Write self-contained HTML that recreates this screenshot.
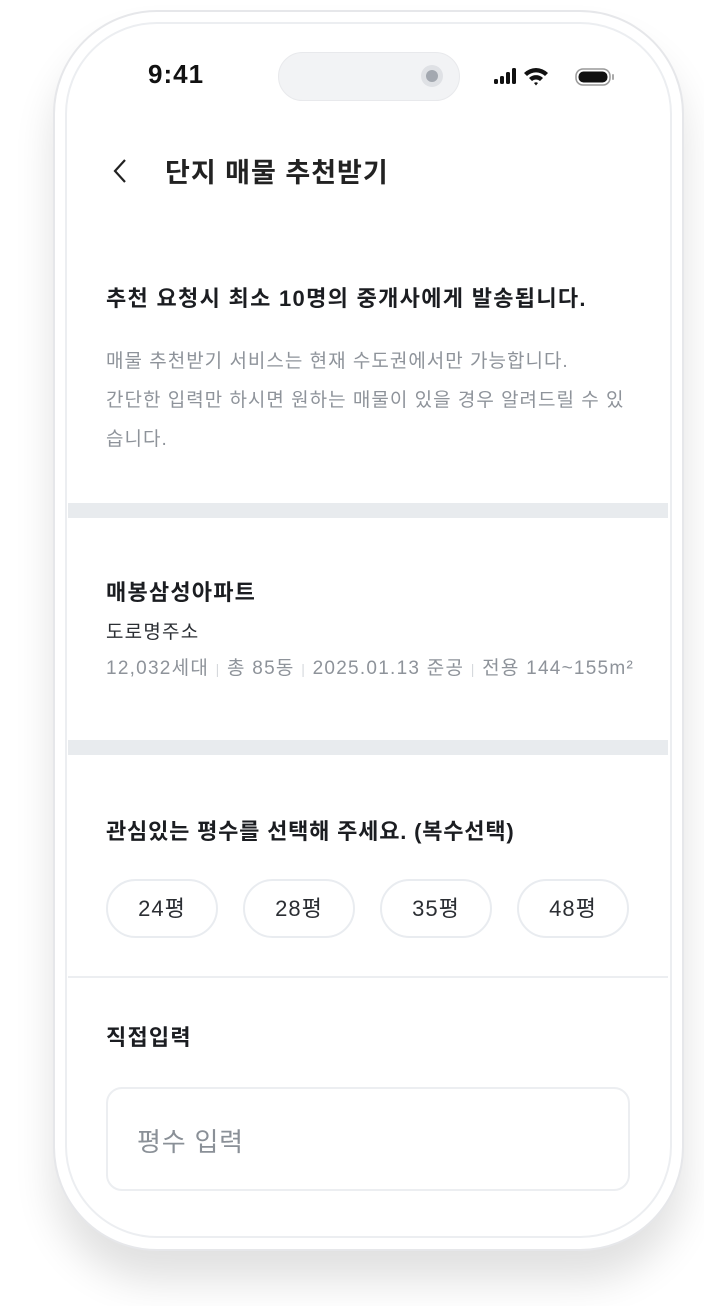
<!DOCTYPE html>
<html><head><meta charset="utf-8"><style>
*{margin:0;padding:0;box-sizing:border-box}
body{width:704px;height:1306px;background:#fff;position:relative;overflow:hidden;font-family:"Liberation Sans","Noto Sans CJK KR",sans-serif;color:#1b1d21}
.a{position:absolute;white-space:nowrap}
.phone{position:absolute;left:53px;top:10px;width:631px;height:1241px;border-radius:104px;border:2px solid #e6e7ea;background:#fff;box-shadow:0 30px 40px rgba(0,0,0,0.12)}
.screen{position:absolute;left:65px;top:22px;width:607px;height:1216px;border-radius:92px;border:2px solid #eceef1;background:#fff;overflow:hidden}
.bar{position:absolute;left:68px;width:600px;height:15px;background:#e8ebee}
.chip{position:absolute;top:879px;width:112px;height:59px;border:2px solid #e9ecf0;border-radius:30px;font-size:22px;letter-spacing:1px;line-height:55px;text-align:center;color:#2b2e33}
.g{color:#8e939a;font-size:19px;letter-spacing:1px}
</style></head><body>
<div class="phone"></div>
<div class="screen"></div>
<div class="a" style="left:148px;top:59px;font-size:26px;letter-spacing:1px;font-weight:bold;color:#111">9:41</div>
<div class="a" style="left:278px;top:52px;width:182px;height:49px;border-radius:25px;background:#f2f3f5;border:1px solid #e8e9ec"></div>
<div class="a" style="left:421px;top:65px;width:22px;height:22px;border-radius:50%;background:#dfe1e5"></div>
<div class="a" style="left:426px;top:70px;width:12px;height:12px;border-radius:50%;background:#a3a8b0"></div>
<svg class="a" style="left:494px;top:66px" width="128" height="22" viewBox="0 0 128 22">
<rect x="0" y="13" width="4" height="5" rx="1.5" fill="#111"/><rect x="6" y="10" width="4" height="8" rx="1.5" fill="#111"/><rect x="12" y="6" width="4" height="12" rx="1.5" fill="#111"/><rect x="18" y="2" width="4" height="16" rx="1.5" fill="#111"/>
<path d="M30 7 A17 17 0 0 1 54 7 L51 10 A13 13 0 0 0 33 10Z M35 12 A10 10 0 0 1 49 12 L46 15 A6 6 0 0 0 38 15Z M40 17 L42 19.5 L44 17 A3 3 0 0 0 40 17Z" fill="#111"/>
<rect x="82" y="3" width="34" height="16" rx="7" fill="none" stroke="#999" stroke-width="1.5"/><rect x="84.5" y="5.5" width="29" height="11" rx="5" fill="#111"/><rect x="118" y="8" width="2" height="6" rx="1" fill="#aaa"/>
</svg>
<svg class="a" style="left:112px;top:158px" width="16" height="26" viewBox="0 0 16 26"><path d="M13 2 L3 13 L13 24" fill="none" stroke="#222" stroke-width="2.2"/></svg>
<div class="a" style="left:165px;top:151px;font-size:27px;letter-spacing:1px;font-weight:bold;color:#222">단지 매물 추천받기</div>
<div class="a" style="left:106px;top:281px;font-size:22px;letter-spacing:1.3px;font-weight:bold">추천 요청시 최소 10명의 중개사에게 발송됩니다.</div>
<div class="a g" style="left:106px;top:342px;line-height:39px">매물 추천받기 서비스는 현재 수도권에서만 가능합니다.<br>간단한 입력만 하시면 원하는 매물이 있을 경우 알려드릴 수 있<br>습니다.</div>
<div class="bar" style="top:503px"></div>
<div class="a" style="left:106px;top:575px;font-size:22px;letter-spacing:1.2px;font-weight:bold">매봉삼성아파트</div>
<div class="a" style="left:106px;top:617px;font-size:19px;letter-spacing:1.2px;color:#2b2e33">도로명주소</div>
<div class="a g" style="left:106px;top:653px;letter-spacing:1.25px">12,032세대 <span style="color:#d6d9dd;font-size:14px">|</span> 총 85동 <span style="color:#d6d9dd;font-size:14px">|</span> 2025.01.13 준공 <span style="color:#d6d9dd;font-size:14px">|</span> 전용 144~155m²</div>
<div class="bar" style="top:740px"></div>
<div class="a" style="left:106px;top:814px;font-size:22px;letter-spacing:0.8px;font-weight:bold">관심있는 평수를 선택해 주세요. (복수선택)</div>
<div class="chip" style="left:106px">24평</div>
<div class="chip" style="left:243px">28평</div>
<div class="chip" style="left:380px">35평</div>
<div class="chip" style="left:517px">48평</div>
<div class="a" style="left:68px;top:976px;width:600px;height:2px;background:#eceef1"></div>
<div class="a" style="left:106px;top:1020px;font-size:22px;letter-spacing:1.2px;font-weight:bold">직접입력</div>
<div class="a" style="left:106px;top:1087px;width:524px;height:104px;border:2px solid #eceef1;border-radius:16px"></div>
<div class="a" style="left:137px;top:1122px;font-size:26px;letter-spacing:0.8px;color:#8a9097">평수 입력</div>
</body></html>
